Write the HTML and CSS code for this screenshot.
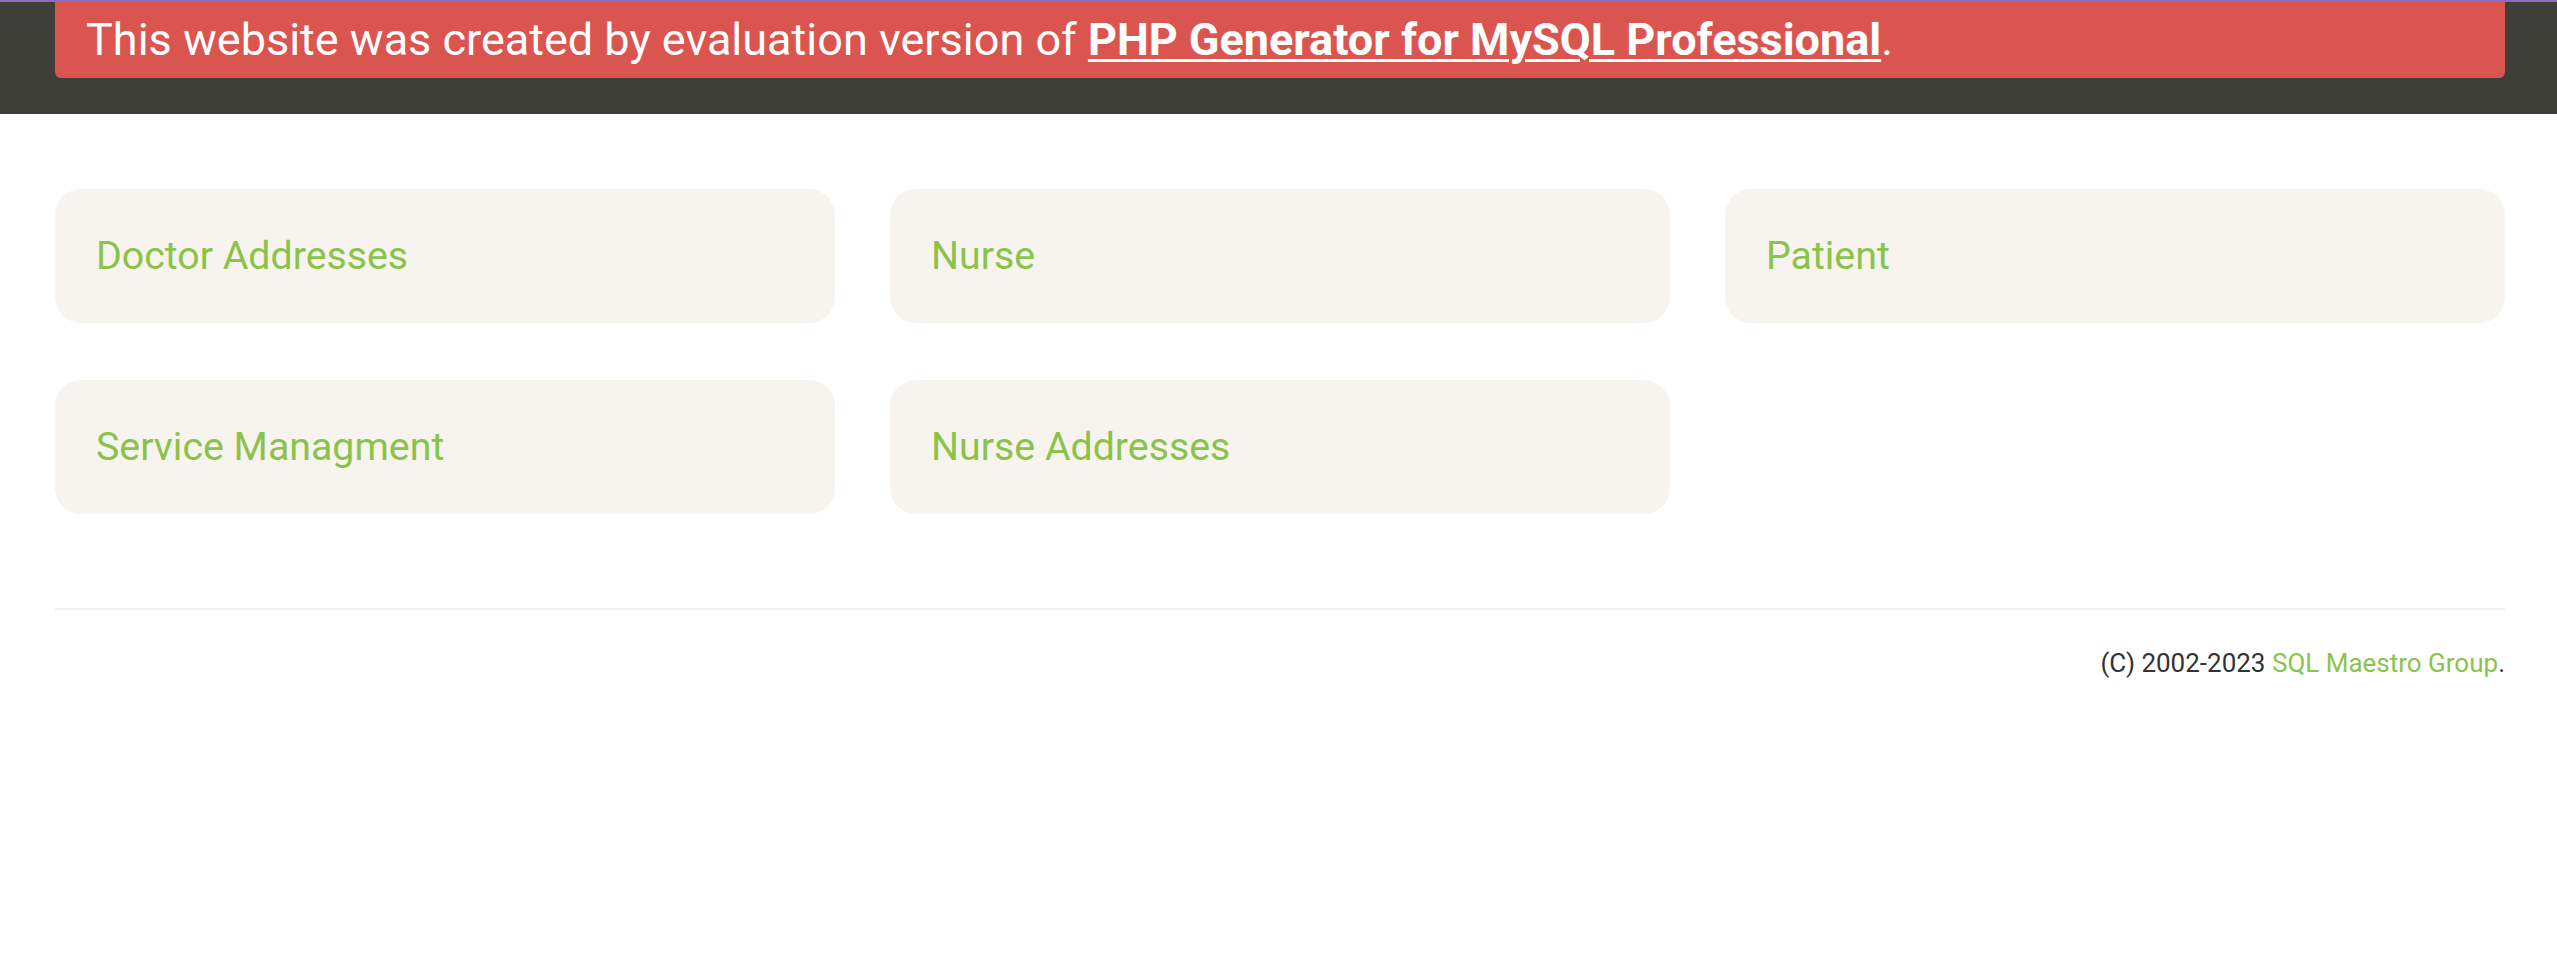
FILE: index.html
```html
<!DOCTYPE html>
<html lang="en">
<head>
<meta charset="utf-8">
<title>Dashboard</title>
<link rel="stylesheet" href="styles.css">
</head>
<body>
<header class="topbar">
  <div class="wrap">
    <div class="eval-banner">This website was created by evaluation version of <a href="#">PHP Generator for MySQL Professional</a>.</div>
  </div>
</header>
<main class="wrap">
  <div class="tiles">
    <a class="tile" href="#">Doctor Addresses</a>
    <a class="tile" href="#">Nurse</a>
    <a class="tile" href="#">Patient</a>
    <a class="tile" href="#">Service Managment</a>
    <a class="tile" href="#">Nurse Addresses</a>
  </div>
  <footer class="footer">
    <span>(C) 2002-2023 <a href="#">SQL Maestro Group</a>.</span>
  </footer>
</main>
</body>
</html>
```
FILE: styles.css
```css
html, body {
  margin: 0;
  padding: 0;
  background: #ffffff;
  font-family: Roboto, "Liberation Sans", Arial, sans-serif;
}
.wrap {
  padding: 0 52px 0 55px;
}
.topbar {
  background: #3f3f3a;
  border-top: 2px solid #8c6dbd;
  height: 112px;
}
.eval-banner {
  background: #db5550;
  color: #ffffff;
  font-size: 45px;
  height: 76px;
  line-height: 76px;
  padding: 0 31px;
  border-radius: 0 0 6px 6px;
  white-space: nowrap;
}
.eval-banner a {
  color: #ffffff;
  font-weight: 700;
  text-decoration: underline;
  text-underline-offset: 4px;
  text-decoration-thickness: 3px;
}
.tiles {
  display: grid;
  grid-template-columns: repeat(3, 1fr);
  gap: 57px 55px;
  padding-top: 75px;
}
.tile {
  display: flex;
  align-items: center;
  height: 134px;
  padding: 0 41px;
  background: #f7f4ef;
  border-radius: 26px;
  color: #8bc34a;
  font-size: 39.3px;
  text-decoration: none;
}
.footer {
  margin-top: 94px;
  border-top: 2px solid #f4f2ef;
  text-align: right;
  padding-top: 38px;
  font-size: 26px;
  color: #333333;
}
.footer a {
  color: #8bc34a;
  text-decoration: none;
}
```
